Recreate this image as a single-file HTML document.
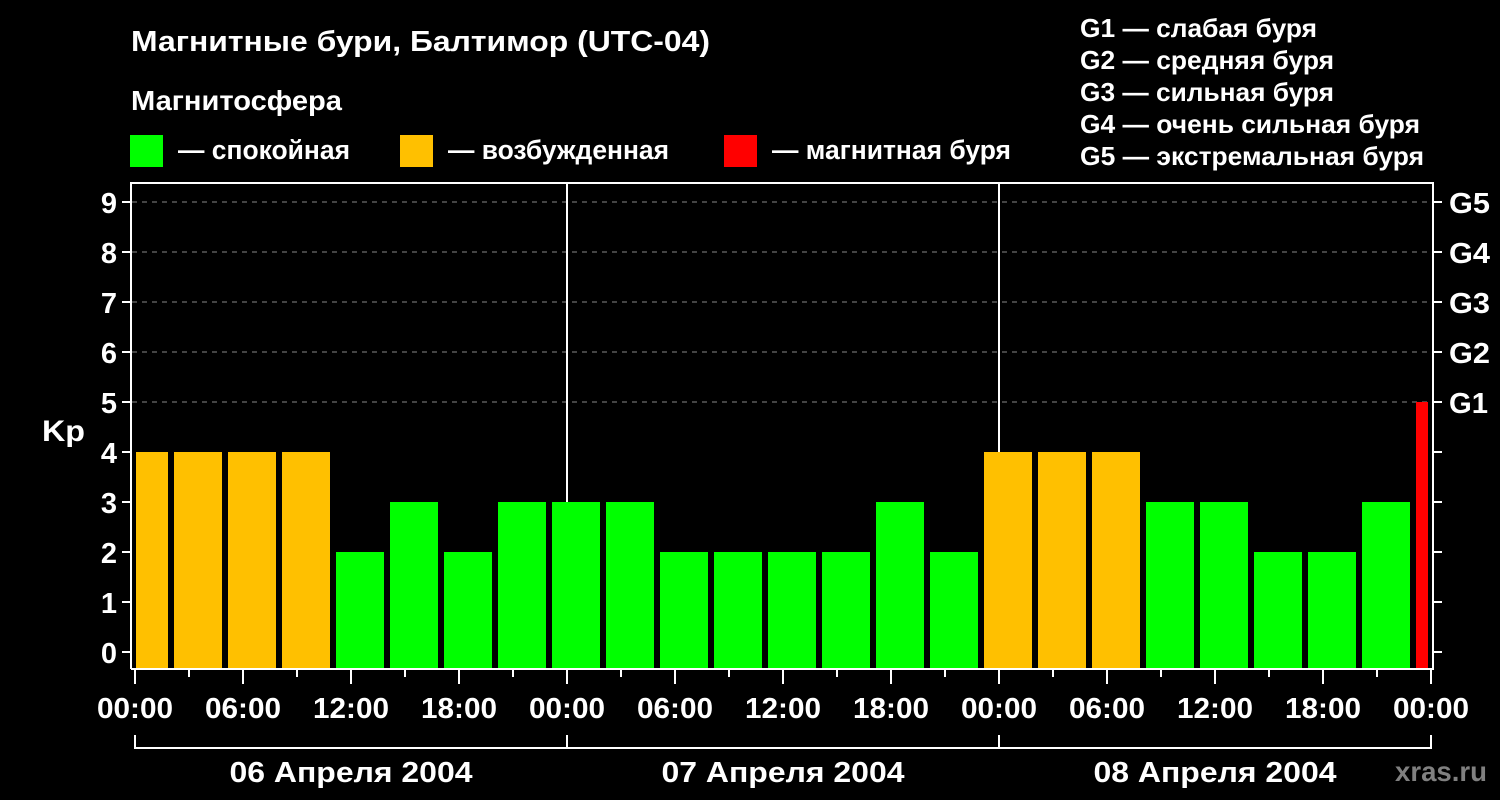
<!DOCTYPE html>
<html><head><meta charset="utf-8"><style>html,body{margin:0;padding:0;background:#000;}svg{display:block}</style></head>
<body>
<svg width="1500" height="800" xmlns="http://www.w3.org/2000/svg" font-family="Liberation Sans, Arial, sans-serif" font-weight="bold" fill="#fff">
<rect width="1500" height="800" fill="#000"/>
<text x="131" y="51" font-size="29" textLength="579" lengthAdjust="spacingAndGlyphs">Магнитные бури, Балтимор (UTC-04)</text>
<text x="131" y="110" font-size="28" textLength="211" lengthAdjust="spacingAndGlyphs">Магнитосфера</text>
<rect x="130" y="135" width="33" height="32" fill="#00ff00"/>
<text x="178" y="159" font-size="27" textLength="172" lengthAdjust="spacingAndGlyphs">— спокойная</text>
<rect x="400" y="135" width="33" height="32" fill="#ffc000"/>
<text x="448" y="159" font-size="27" textLength="221" lengthAdjust="spacingAndGlyphs">— возбужденная</text>
<rect x="724" y="135" width="33" height="32" fill="#ff0000"/>
<text x="772" y="159" font-size="27" textLength="239" lengthAdjust="spacingAndGlyphs">— магнитная буря</text>
<g font-size="26">
<text x="1080" y="37" textLength="237" lengthAdjust="spacingAndGlyphs">G1 — слабая буря</text>
<text x="1080" y="69" textLength="254" lengthAdjust="spacingAndGlyphs">G2 — средняя буря</text>
<text x="1080" y="101" textLength="254" lengthAdjust="spacingAndGlyphs">G3 — сильная буря</text>
<text x="1080" y="133" textLength="340" lengthAdjust="spacingAndGlyphs">G4 — очень сильная буря</text>
<text x="1080" y="165" textLength="344" lengthAdjust="spacingAndGlyphs">G5 — экстремальная буря</text>
</g>
<g stroke="#888" stroke-width="1" stroke-dasharray="5,5">
<line x1="132" y1="202" x2="1432" y2="202"/><line x1="132" y1="252" x2="1432" y2="252"/><line x1="132" y1="302" x2="1432" y2="302"/><line x1="132" y1="352" x2="1432" y2="352"/><line x1="132" y1="402" x2="1432" y2="402"/>
</g>
<g stroke="#fff" stroke-width="2">
<line x1="567" y1="183" x2="567" y2="668"/><line x1="999" y1="183" x2="999" y2="668"/>
</g>
<g fill="#ffc000">
<rect x="136" y="452" width="32" height="216"/><rect x="174" y="452" width="48" height="216"/><rect x="228" y="452" width="48" height="216"/><rect x="282" y="452" width="48" height="216"/>
<rect x="984" y="452" width="48" height="216"/><rect x="1038" y="452" width="48" height="216"/><rect x="1092" y="452" width="48" height="216"/>
</g>
<g fill="#00ff00">
<rect x="336" y="552" width="48" height="116"/><rect x="390" y="502" width="48" height="166"/><rect x="444" y="552" width="48" height="116"/><rect x="498" y="502" width="48" height="166"/>
<rect x="552" y="502" width="48" height="166"/><rect x="606" y="502" width="48" height="166"/><rect x="660" y="552" width="48" height="116"/><rect x="714" y="552" width="48" height="116"/>
<rect x="768" y="552" width="48" height="116"/><rect x="822" y="552" width="48" height="116"/><rect x="876" y="502" width="48" height="166"/><rect x="930" y="552" width="48" height="116"/>
<rect x="1146" y="502" width="48" height="166"/><rect x="1200" y="502" width="48" height="166"/><rect x="1254" y="552" width="48" height="116"/><rect x="1308" y="552" width="48" height="116"/><rect x="1362" y="502" width="48" height="166"/>
</g>
<rect x="1416" y="402" width="12" height="266" fill="#ff0000"/>
<g stroke="#fff" stroke-width="2" fill="none">
<polyline points="131,669 131,183 1433,183 1433,669 131,669"/>
<path d="M122 202H131M122 252H131M122 302H131M122 352H131M122 402H131M122 452H131M122 502H131M122 552H131M122 602H131M122 652H131"/>
<path d="M1433 202H1442M1433 252H1442M1433 302H1442M1433 352H1442M1433 402H1442M1433 452H1442M1433 502H1442M1433 552H1442M1433 602H1442M1433 652H1442"/>
<path d="M135 669V684M243 669V684M351 669V684M459 669V684M567 669V684M675 669V684M783 669V684M891 669V684M999 669V684M1107 669V684M1215 669V684M1323 669V684M1431 669V684"/>
<path d="M189 669V677M297 669V677M405 669V677M513 669V677M621 669V677M729 669V677M837 669V677M945 669V677M1053 669V677M1161 669V677M1269 669V677M1377 669V677"/>
<path d="M135 735V748H1431V735M567 735V748M999 735V748"/>
</g>
<g font-size="29" text-anchor="end">
<text x="117" y="213">9</text><text x="117" y="263">8</text><text x="117" y="313">7</text><text x="117" y="363">6</text><text x="117" y="413">5</text><text x="117" y="463">4</text><text x="117" y="513">3</text><text x="117" y="563">2</text><text x="117" y="613">1</text><text x="117" y="663">0</text>
</g>
<text x="42" y="441" font-size="30" textLength="43" lengthAdjust="spacingAndGlyphs">Kp</text>
<g font-size="29">
<text x="1449" y="213" textLength="41" lengthAdjust="spacingAndGlyphs">G5</text><text x="1449" y="263" textLength="41" lengthAdjust="spacingAndGlyphs">G4</text><text x="1449" y="313" textLength="41" lengthAdjust="spacingAndGlyphs">G3</text><text x="1449" y="363" textLength="41" lengthAdjust="spacingAndGlyphs">G2</text><text x="1449" y="413" textLength="39" lengthAdjust="spacingAndGlyphs">G1</text>
</g>
<g font-size="29" text-anchor="middle">
<text x="135" y="718" textLength="76" lengthAdjust="spacingAndGlyphs">00:00</text><text x="243" y="718" textLength="76" lengthAdjust="spacingAndGlyphs">06:00</text><text x="351" y="718" textLength="76" lengthAdjust="spacingAndGlyphs">12:00</text><text x="459" y="718" textLength="76" lengthAdjust="spacingAndGlyphs">18:00</text>
<text x="567" y="718" textLength="76" lengthAdjust="spacingAndGlyphs">00:00</text><text x="675" y="718" textLength="76" lengthAdjust="spacingAndGlyphs">06:00</text><text x="783" y="718" textLength="76" lengthAdjust="spacingAndGlyphs">12:00</text><text x="891" y="718" textLength="76" lengthAdjust="spacingAndGlyphs">18:00</text>
<text x="999" y="718" textLength="76" lengthAdjust="spacingAndGlyphs">00:00</text><text x="1107" y="718" textLength="76" lengthAdjust="spacingAndGlyphs">06:00</text><text x="1215" y="718" textLength="76" lengthAdjust="spacingAndGlyphs">12:00</text><text x="1323" y="718" textLength="76" lengthAdjust="spacingAndGlyphs">18:00</text><text x="1431" y="718" textLength="76" lengthAdjust="spacingAndGlyphs">00:00</text>
<text x="351" y="782" textLength="243" lengthAdjust="spacingAndGlyphs">06 Апреля 2004</text><text x="783" y="782" textLength="243" lengthAdjust="spacingAndGlyphs">07 Апреля 2004</text><text x="1215" y="782" textLength="243" lengthAdjust="spacingAndGlyphs">08 Апреля 2004</text>
</g>
<text x="1395" y="781" font-size="28" fill="#808080" textLength="92" lengthAdjust="spacingAndGlyphs">xras.ru</text>
</svg>
</body></html>
